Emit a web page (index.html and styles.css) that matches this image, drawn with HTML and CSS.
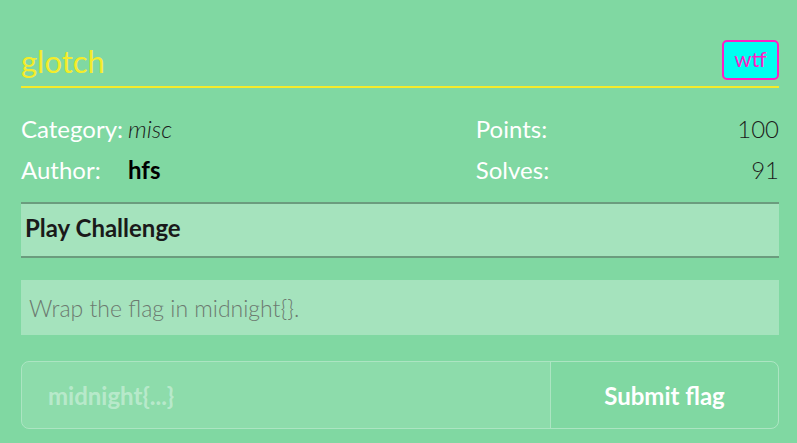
FILE: index.html
```html
<!DOCTYPE html>
<html lang="en">
<head>
  <meta charset="UTF-8" />
  <meta name="viewport" content="width=device-width, initial-scale=1.0" />
  <title>glotch</title>
  <link rel="stylesheet" href="styles.css">
</head>
<body>
  <main class="challenge">
    <!-- Title -->
    <div class="chal-head">
      <h2 class="chal-title">glotch</h2>
      <span class="badge">wtf</span>
    </div>

    <!-- Meta info -->
    <div class="meta">
      <div class="meta-left">
        <span class="label">Category:</span><span class="cat">misc</span>
        <span class="label">Author:</span><span class="author">hfs</span>
      </div>
      <div class="meta-right">
        <span class="label">Points:</span><span class="num">100</span>
        <span class="label">Solves:</span><span class="num">91</span>
      </div>
    </div>

    <button class="play">Play Challenge</button>

    <div class="desc">Wrap the flag in midnight{}.</div>

    <form class="flag-form" onsubmit="return false">
      <input type="text" class="flag-input" placeholder="midnight{...}" />
      <button type="submit" class="flag-submit">Submit flag</button>
    </form>
  </main>
</body>
</html>
```

FILE: styles.css
```css
:root {
  --bg: #80d8a2;
  --box: #a5e3bd;
  --yellow: #f4ec2a;
  --line: #6b9c7e;
}
* { box-sizing: border-box; margin: 0; padding: 0; }
body { background: var(--bg); font-family: 'Lato', sans-serif; font-size: 24px; }
.challenge { padding: 40px 18px 0 21px; }

/* Title */
.chal-head {
  display: flex;
  justify-content: space-between;
  align-items: flex-end;
  padding-bottom: 6px;
  border-bottom: 2px solid var(--yellow);
}
.chal-title { color: var(--yellow); font-size: 31px; font-weight: 400; line-height: 1.2; }
.badge {
  display: block;
  width: 57px;
  height: 40px;
  line-height: 34px;
  text-align: center;
  background: #00fff0;
  color: #ff1fc4;
  border: 2px solid #ff1fc4;
  border-radius: 5px;
  font-size: 22px;
}

/* Meta */
.meta { display: grid; grid-template-columns: 3fr 2fr; margin-top: 23px; line-height: 36px; }
.meta-left, .meta-right { display: grid; grid-template-columns: auto 1fr; column-gap: 5px; row-gap: 5px; }
.label { color: #fff; }
.cat { font-style: italic; font-weight: 300; color: #1c1c1c; }
.author { font-weight: 700; color: #000; }
.num { text-align: right; font-weight: 300; color: #1c1c1c; }

/* Play button */
.play {
  display: block;
  width: 100%;
  margin-top: 14px;
  height: 56px;
  padding: 0 4px 6px;
  text-align: left;
  font-family: inherit;
  font-size: 24px;
  font-weight: 700;
  color: #1a1a1a;
  background: var(--box);
  border: none;
  border-top: 2px solid var(--line);
  border-bottom: 2px solid var(--line);
}

/* Description */
.desc {
  margin-top: 22px;
  height: 55px;
  padding: 10px 8px 0;
  background: var(--box);
  color: #6c7a70;
  font-size: 23px;
  font-weight: 300;
  line-height: 36px;
}

/* Flag form */
.flag-form {
  display: flex;
  margin-top: 26px;
  height: 68px;
  border: 1px solid rgba(255,255,255,0.35);
  border-radius: 8px;
  overflow: hidden;
}
.flag-input {
  flex: 1;
  padding: 0 26px;
  border: none;
  background: rgba(255,255,255,0.1);
  font-family: inherit;
  font-size: 24px;
  font-weight: 700;
  color: #fff;
  outline: none;
}
.flag-input::placeholder { color: rgba(255,255,255,0.4); }
.flag-submit {
  width: 228px;
  border: none;
  border-left: 1px solid rgba(255,255,255,0.35);
  background: transparent;
  color: #fff;
  font-family: inherit;
  font-size: 24px;
  font-weight: 700;
  cursor: pointer;
}
```
